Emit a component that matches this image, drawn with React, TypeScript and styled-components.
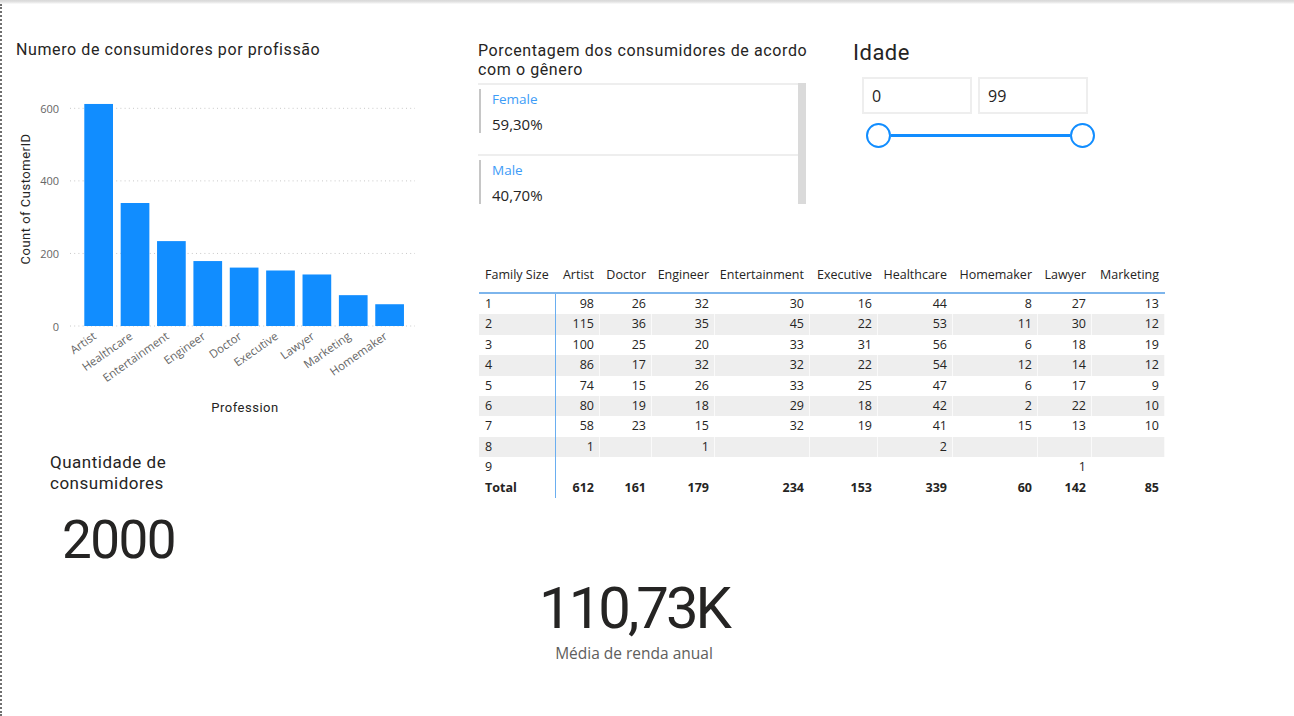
import React from 'react';
import styled, { createGlobalStyle } from 'styled-components';

const DIN = `"Roboto", "DejaVu Sans", sans-serif`;
const SEGOE = `"Open Sans", "Noto Sans", sans-serif`;
const BLUE = '#118DFF';
const INK = '#252423';

const GlobalStyle = createGlobalStyle`
  html, body { margin: 0; padding: 0; background: #ffffff; }
  body { font-family: ${SEGOE}; color: ${INK}; }
`;

const Page = styled.div`
  width: 1294px;
  height: 716px;
  overflow: hidden;
  display: flex;
  flex-direction: column;
  background: #fff;
`;

const TopBar = styled.div`
  height: 4px;
  flex: none;
  background: linear-gradient(#d8d8d8 0, #e3e3e3 2px, #f2f2f2 3px, #fbfbfb 4px);
`;

const Canvas = styled.div`
  flex: 1;
  display: grid;
  grid-template-columns: 476px 1fr;
  border-left: 2px dotted #707070;
`;

const LeftColumn = styled.div`
  display: flex;
  flex-direction: column;
  align-items: flex-start;
  padding-top: 36px;
`;

const RightColumn = styled.div`
  display: flex;
  flex-direction: column;
  align-items: flex-start;
  padding-top: 36px;
`;

const VisualTitle = styled.h2`
  margin: 0 0 0 14px;
  font: 400 16px/20px ${DIN};
  letter-spacing: 0.6px;
  color: ${INK};
  white-space: nowrap;
`;

const ChartSvg = styled.svg`
  display: block;
  margin: 25px 0 0 8px;
  overflow: visible;
`;

const TickText = styled.text`
  font-family: ${SEGOE};
  font-size: 11px;
  fill: #666666;
`;

const CategoryText = styled.text`
  font-family: ${SEGOE};
  font-size: 11.5px;
  fill: #666666;
`;

const AxisTitle = styled.text`
  font-family: ${DIN};
  font-size: 13px;
  letter-spacing: 0.5px;
  fill: ${INK};
`;

const KpiBlock = styled.div`
  margin: 32px 0 0 48px;
`;

const KpiLabel = styled.div`
  width: 125px;
  font: 400 17px/21px ${DIN};
  letter-spacing: 0.5px;
  color: ${INK};
`;

const KpiValue = styled.div`
  margin: 20px 0 0 12px;
  font: 400 53px/53px ${DIN};
  letter-spacing: -1.5px;
  color: ${INK};
`;

const TopRow = styled.div`
  display: flex;
  align-items: flex-start;
`;

const GenderCard = styled.div`
  width: 328px;
  margin-top: 1px;
`;

const CardTitle = styled.h2`
  margin: 0;
  font: 400 16px/19px ${DIN};
  letter-spacing: 0.6px;
  color: ${INK};
  white-space: nowrap;
`;

const ListBox = styled.div`
  margin-top: 4px;
  height: 121px;
  width: 328px;
  display: flex;
  overflow: hidden;
`;

const List = styled.div`
  flex: 1;
`;

const Scrollbar = styled.div`
  width: 8px;
  flex: none;
  background: #dadada;
`;

const ListItem = styled.div`
  border-top: 2px solid #eeeeee;
  padding: 4px 0 21px 1px;
`;

const ItemBody = styled.div`
  border-left: 2px solid #c6c6c6;
  padding-left: 11px;
`;

const ItemLabel = styled.div`
  font: 400 13.5px/20px ${SEGOE};
  color: #3d9cf7;
`;

const ItemValue = styled.div`
  margin-top: 6px;
  font: 400 15px/18px ${SEGOE};
  color: ${INK};
`;

const IdadePanel = styled.div`
  margin: -1px 0 0 47px;
`;

const IdadeTitle = styled.h2`
  margin: 0;
  font: 400 22px/28px ${DIN};
  letter-spacing: 0.5px;
  color: ${INK};
`;

const InputsRow = styled.div`
  display: flex;
  gap: 6px;
  margin: 10px 0 0 9px;
`;

const InputBox = styled.div`
  box-sizing: border-box;
  width: 110px;
  height: 37px;
  border: 2px solid #eeeeee;
  padding-left: 8px;
  display: flex;
  align-items: center;
  font: 400 16px ${SEGOE};
  color: ${INK};
`;

const Slider = styled.div`
  display: flex;
  align-items: center;
  width: 229px;
  margin: 9px 0 0 13px;
`;

const Knob = styled.div`
  box-sizing: border-box;
  width: 25px;
  height: 25px;
  flex: none;
  border: 2.5px solid ${BLUE};
  border-radius: 50%;
  background: #fff;
`;

const Track = styled.div`
  flex: 1;
  height: 3px;
  background: ${BLUE};
`;

const Table = styled.div`
  margin: 61px 0 0 1px;
`;

const COLS = '77px 44px 52px 63px 95px 68px 75px 85px 54px 73px';

const HeaderRow = styled.div`
  display: grid;
  grid-template-columns: ${COLS};
  height: 27px;
  border-bottom: 2px solid #7db5ec;
`;

const HeaderCell = styled.div<{ $first?: boolean }>`
  padding: 0 ${(p) => (p.$first ? '0' : '6px')} 0 ${(p) => (p.$first ? '6px' : '0')};
  text-align: ${(p) => (p.$first ? 'left' : 'right')};
  font: 400 12.5px/20px ${SEGOE};
  color: ${INK};
  white-space: nowrap;
`;

const DataRow = styled.div<{ $alt?: boolean; $total?: boolean }>`
  display: grid;
  grid-template-columns: ${COLS};
  height: 20.4px;
  background: ${(p) => (p.$alt ? '#eeeeee' : 'transparent')};
  font-weight: ${(p) => (p.$total ? 700 : 400)};
`;

const Cell = styled.div<{ $first?: boolean }>`
  box-sizing: border-box;
  padding: 0 ${(p) => (p.$first ? '0' : '5px')} 0 ${(p) => (p.$first ? '6px' : '0')};
  text-align: ${(p) => (p.$first ? 'left' : 'right')};
  border-right: 1px solid ${(p) => (p.$first ? '#6aaef0' : 'rgba(255,255,255,0.7)')};
  font-family: ${SEGOE};
  font-size: 12.5px;
  line-height: 20.4px;
  color: ${INK};
  white-space: nowrap;
`;

const BigKpi = styled.div`
  margin-top: 81px;
  width: 312px;
  text-align: center;
`;

const BigValue = styled.div`
  font: 400 58px/58px ${DIN};
  letter-spacing: -3px;
  color: ${INK};
`;

const BigLabel = styled.div`
  margin-top: 6px;
  font: 400 15.5px/20px ${SEGOE};
  color: #605e5c;
`;

const professions: [string, number][] = [
  ['Artist', 612],
  ['Healthcare', 339],
  ['Entertainment', 234],
  ['Engineer', 179],
  ['Doctor', 161],
  ['Executive', 153],
  ['Lawyer', 142],
  ['Marketing', 85],
  ['Homemaker', 60],
];

const headers = ['Family Size', 'Artist', 'Doctor', 'Engineer', 'Entertainment', 'Executive', 'Healthcare', 'Homemaker', 'Lawyer', 'Marketing'];

const rows: string[][] = [
  ['1', '98', '26', '32', '30', '16', '44', '8', '27', '13'],
  ['2', '115', '36', '35', '45', '22', '53', '11', '30', '12'],
  ['3', '100', '25', '20', '33', '31', '56', '6', '18', '19'],
  ['4', '86', '17', '32', '32', '22', '54', '12', '14', '12'],
  ['5', '74', '15', '26', '33', '25', '47', '6', '17', '9'],
  ['6', '80', '19', '18', '29', '18', '42', '2', '22', '10'],
  ['7', '58', '23', '15', '32', '19', '41', '15', '13', '10'],
  ['8', '1', '', '1', '', '', '2', '', '', ''],
  ['9', '', '', '', '', '', '', '', '1', ''],
  ['Total', '612', '161', '179', '234', '153', '339', '60', '142', '85'],
];

const Y0 = 241;
const SCALE = 0.3628;

function BarChart() {
  const ticks = [0, 200, 400, 600];
  return (
    <ChartSvg width={420} height={335} viewBox="0 0 420 335">
      {ticks.map((t) => {
        const y = Y0 - t * SCALE;
        return (
          <g key={t}>
            <line x1={60} x2={405} y1={y} y2={y} stroke="#c8c8c8" strokeWidth={1} strokeDasharray="1 3.2" />
            <TickText x={49} y={y} textAnchor="end" dominantBaseline="central">
              {t}
            </TickText>
          </g>
        );
      })}
      {professions.map(([name, v], i) => {
        const x = 74.3 + i * 36.37;
        const h = v * SCALE;
        const cx = x + 14.35;
        return (
          <g key={name}>
            <rect x={x} y={Y0 - h} width={28.7} height={h} fill={BLUE} />
            <CategoryText x={cx - 1.5} y={253} textAnchor="end" transform={`rotate(-35 ${cx - 1.5} 253)`}>
              {name}
            </CategoryText>
          </g>
        );
      })}
      <AxisTitle x={235} y={322} textAnchor="middle" dominantBaseline="central">
        Profession
      </AxisTitle>
      <AxisTitle x={15} y={114} textAnchor="middle" dominantBaseline="central" transform="rotate(-90 15 114)">
        Count of CustomerID
      </AxisTitle>
    </ChartSvg>
  );
}

export default function App() {
  return (
    <>
      <GlobalStyle />
      <Page>
        <TopBar />
        <Canvas>
          <LeftColumn>
            <VisualTitle>Numero de consumidores por profissão</VisualTitle>
            <BarChart />
            <KpiBlock>
              <KpiLabel>Quantidade de consumidores</KpiLabel>
              <KpiValue>2000</KpiValue>
            </KpiBlock>
          </LeftColumn>
          <RightColumn>
            <TopRow>
              <GenderCard>
                <CardTitle>
                  Porcentagem dos consumidores de acordo
                  <br />
                  com o gênero
                </CardTitle>
                <ListBox>
                  <List>
                    <ListItem>
                      <ItemBody>
                        <ItemLabel>Female</ItemLabel>
                        <ItemValue>59,30%</ItemValue>
                      </ItemBody>
                    </ListItem>
                    <ListItem>
                      <ItemBody>
                        <ItemLabel>Male</ItemLabel>
                        <ItemValue>40,70%</ItemValue>
                      </ItemBody>
                    </ListItem>
                  </List>
                  <Scrollbar />
                </ListBox>
              </GenderCard>
              <IdadePanel>
                <IdadeTitle>Idade</IdadeTitle>
                <InputsRow>
                  <InputBox>0</InputBox>
                  <InputBox>99</InputBox>
                </InputsRow>
                <Slider>
                  <Knob />
                  <Track />
                  <Knob />
                </Slider>
              </IdadePanel>
            </TopRow>
            <Table>
              <HeaderRow>
                {headers.map((h, i) => (
                  <HeaderCell key={h} $first={i === 0}>
                    {h}
                  </HeaderCell>
                ))}
              </HeaderRow>
              {rows.map((r, ri) => (
                <DataRow key={r[0]} $alt={ri % 2 === 1 && ri < 9} $total={ri === 9}>
                  {r.map((c, ci) => (
                    <Cell key={ci} $first={ci === 0}>
                      {c}
                    </Cell>
                  ))}
                </DataRow>
              ))}
            </Table>
            <BigKpi>
              <BigValue>110,73K</BigValue>
              <BigLabel>Média de renda anual</BigLabel>
            </BigKpi>
          </RightColumn>
        </Canvas>
      </Page>
    </>
  );
}
